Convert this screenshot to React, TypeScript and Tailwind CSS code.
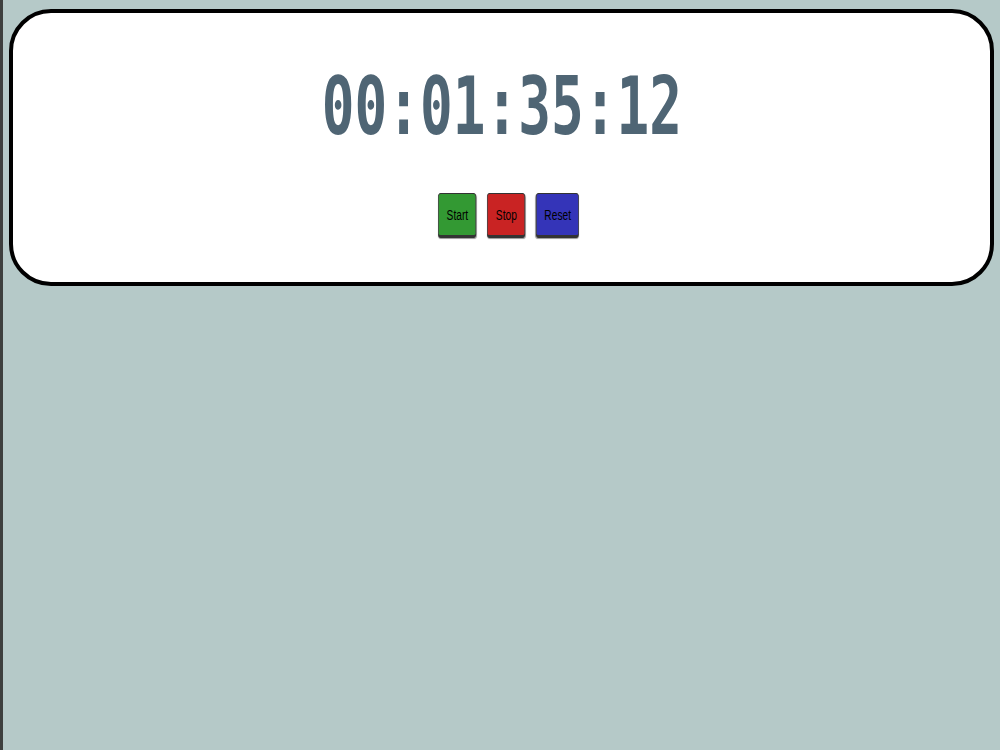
import { useEffect, useState } from "react"

function pad(n: number) {
  return String(n).padStart(2, "0")
}

export default function App() {
  // hundredths of a second, starts at the time shown in the mock
  const [ticks] = useState(95 * 100 + 12)
  const [running, setRunning] = useState(false)

  useEffect(() => {
    if (!running) return
  }, [running])

  const h = Math.floor(ticks / 360000)
  const m = Math.floor((ticks / 6000) % 60)
  const s = Math.floor((ticks / 100) % 60)
  const cs = ticks % 100
  const display = `${pad(h)}:${pad(m)}:${pad(s)}:${pad(cs)}`

  return (
    <div className="flex min-h-[750px] w-full bg-[#b5c9c8]">
      <div className="w-[3px] shrink-0 bg-[#3d3f3e]" />
      <div className="flex-1 pl-[6px] pr-[6px] pt-[9px]">
        <div className="flex h-[277px] flex-col items-center rounded-[42px] border-4 border-black bg-white">
          <div className="flex scale-x-[0.68] flex-col items-center">
            <div className="mt-[54px] font-['DejaVu_Sans_Mono',monospace] text-[80px] font-bold leading-[80px] text-[#4f6574]">
              {display}
            </div>
            <div className="ml-[20px] mt-[46px] flex gap-4 font-['Liberation_Sans',Arial,sans-serif] text-[15px] text-black">
              <button
                type="button"
                onClick={() => setRunning(true)}
                className="h-[45px] w-[56px] rounded-[4px] border border-[#333] border-b-[3px] bg-[#339933] pt-[2px] shadow-[0_1px_1px_rgba(0,0,0,0.4)]"
              >
                Start
              </button>
              <button
                type="button"
                onClick={() => setRunning(false)}
                className="h-[45px] w-[56px] rounded-[4px] border border-[#333] border-b-[3px] bg-[#c92323] pt-[2px] shadow-[0_1px_1px_rgba(0,0,0,0.4)]"
              >
                Stop
              </button>
              <button
                type="button"
                className="h-[45px] w-[63px] rounded-[4px] border border-[#333] border-b-[3px] bg-[#3434b8] pt-[2px] shadow-[0_1px_1px_rgba(0,0,0,0.4)]"
              >
                Reset
              </button>
            </div>
          </div>
        </div>
      </div>
    </div>
  )
}
